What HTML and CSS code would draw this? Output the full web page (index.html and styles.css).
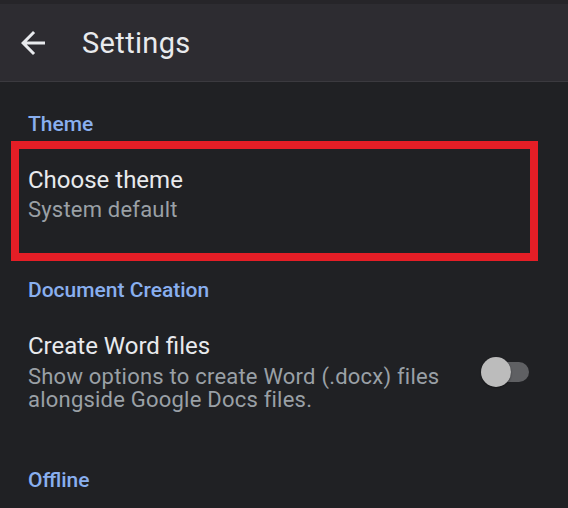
FILE: index.html
```html
<!DOCTYPE html>
<html>
  <head>
    <meta charset="UTF-8" />
    <meta name="viewport" content="width=device-width, initial-scale=1.0" />
    <title>Settings</title>
    <link rel="stylesheet" href="styles.css">
  </head>
  <body>
    <header class="appbar">
      <button class="back" aria-label="Back">
        <svg width="36" height="36" viewBox="0 0 24 24">
          <path fill="#e8eaed" d="M20 11H7.83l5.59-5.59L12 4l-8 8 8 8 1.41-1.41L7.83 13H20v-2z"/>
        </svg>
      </button>
      <h1 class="title">Settings</h1>
    </header>

    <main>
      <h2 class="section-title first">Theme</h2>
      <div class="item highlight">
        <div class="item-title">Choose theme</div>
        <div class="item-summary">System default</div>
      </div>

      <h2 class="section-title doc">Document Creation</h2>
      <div class="item row">
        <div class="item-text">
          <div class="item-title">Create Word files</div>
          <div class="item-desc">Show options to create Word (.docx) files<br>alongside Google Docs files.</div>
        </div>
        <div class="switch">
          <span class="track"></span>
          <span class="thumb"></span>
        </div>
      </div>

      <h2 class="section-title offline">Offline</h2>
    </main>
  </body>
</html>
```

FILE: styles.css
```css
body {
  margin: 0;
  background-color: #202124;
  font-family: Roboto, "Liberation Sans", sans-serif;
  color: #e8eaed;
}
.appbar {
  height: 77px;
  display: flex;
  align-items: center;
  background-color: #2d2c31;
  border-top: 4px solid #262529;
  border-bottom: 1px solid #3b3a3f;
  padding-left: 15px;
}
.back {
  background: none;
  border: none;
  padding: 0;
  width: 36px;
  height: 36px;
  display: flex;
}
.title {
  margin: 0 0 0 31px;
  font-size: 29px;
  line-height: 34px;
  font-weight: 400;
  letter-spacing: 0.35px;
  color: #e8eaed;
}
.section-title {
  margin: 0;
  padding-left: 28px;
  font-size: 21px;
  line-height: 24px;
  font-weight: 500;
  color: #89afef;
}
.section-title.first {
  margin-top: 30px;
}
.section-title.doc {
  margin-top: 17px;
}
.section-title.offline {
  margin-top: 57px;
}
.highlight {
  margin: 5px 30px 0 11px;
  border: 8px solid #e51e26;
  padding: 17px 9px 28px;
}
.item-title {
  font-size: 24px;
  line-height: 28px;
  color: #e8eaed;
}
.item-summary {
  margin-top: 1px;
  font-size: 22px;
  line-height: 30px;
  letter-spacing: 0.2px;
  color: #9aa0a6;
}
.row {
  display: flex;
  align-items: center;
  justify-content: space-between;
  margin-top: 30px;
  padding: 0 39px 0 28px;
}
.item-desc {
  margin-top: 5px;
  font-size: 22px;
  line-height: 23px;
  letter-spacing: 0.22px;
  color: #9aa0a6;
}
.switch {
  position: relative;
  width: 48px;
  height: 30px;
  flex: none;
}
.track {
  position: absolute;
  left: 9px;
  right: 0;
  top: 5px;
  height: 20px;
  border-radius: 10px;
  background-color: #5f6063;
}
.thumb {
  position: absolute;
  left: 0;
  top: 0;
  width: 30px;
  height: 30px;
  border-radius: 50%;
  background-color: #bcbcbc;
  box-shadow: 0 1px 2px rgba(0, 0, 0, 0.4);
}
```
